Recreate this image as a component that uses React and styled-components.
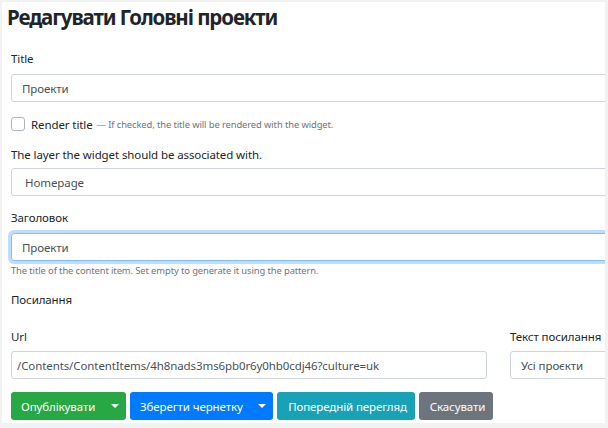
import React from 'react'
import styled, { createGlobalStyle } from 'styled-components';

const GlobalStyle = createGlobalStyle`
    html, body {
        margin : 0;
        padding : 0;
        background : #f2f2f2;
    }
    body {
        font-family : "Noto Sans", "Open Sans", sans-serif;
        color : #212529;
        font-size : 11.5px;
        letter-spacing : -0.1px;
    }
`;

const Page = styled.div`
    width : 608px;
    height : 428px;
    padding : 2px 3px 5px 2px;
    box-sizing : border-box;
`;
const Card = styled.div`
    height : 100%;
    background : #fff;
    overflow : hidden;
    padding : 2px 0 0 9px;
    box-sizing : border-box;
`;
const Heading = styled.h3`
    margin : 0 0 0 -4px;
    font-size : 20.5px;
    font-weight : 700;
    line-height : 27px;
    letter-spacing : -1.1px;
`;
const Label = styled.label`
    display : block;
    line-height : 18px;
    margin-top : ${p => p.$top || 0}px;
    margin-bottom : ${p => p.$gap ?? 6}px;
`;
const Input = styled.div`
    box-sizing : border-box;
    height : 28px;
    width : ${p => p.$width || '640px'};
    border : 1px solid ${p => p.$focus ? '#80bdff' : '#ced4da'};
    box-shadow : ${p => p.$focus ? '0 0 0 3px rgba(0,123,255,.25)' : 'none'};
    border-radius : 3px;
    padding : 0 ${p => p.$pad || 10}px;
    display : flex;
    align-items : center;
    color : #495057;
    white-space : nowrap;
    overflow : hidden;
`;
const CheckRow = styled.div`
    display : flex;
    align-items : center;
    height : 18px;
    margin-top : 13px;
`;
const Box = styled.span`
    width : 12px;
    height : 12px;
    border : 1px solid #adb5bd;
    border-radius : 3px;
    margin-right : 6px;
    background : #fff;
`;
const Hint = styled.span`
    font-size : 9.4px;
    color : #6c757d;
    margin-left : 4px;
`;
const HintLine = styled.div`
    font-size : 9.4px;
    color : #6c757d;
    line-height : 14px;
    margin-top : 3px;
`;
const Row = styled.div`
    display : flex;
    gap : 23px;
`;
const Col = styled.div`
    width : ${p => p.$w};
    flex-shrink : 0;
`;
const Buttons = styled.div`
    display : flex;
    gap : 4px;
    margin-top : 13px;
`;
const Btn = styled.div`
    height : 28px;
    box-sizing : border-box;
    border-radius : 3px;
    background : ${p => p.$bg};
    color : #fff;
    display : flex;
    align-items : center;
    justify-content : ${p => p.$center ? 'center' : 'flex-start'};
    padding : 0 7px 0 10px;
    white-space : nowrap;
    width : ${p => p.$w}px;
`;
const Caret = styled.span`
    margin-left : auto;
    width : 0;
    height : 0;
    border-left : 4px solid transparent;
    border-right : 4px solid transparent;
    border-top : 4px solid #fff;
`;

function App() {
    return (
        <Page>
            <GlobalStyle />
            <Card>
                <Heading>Редагувати Головні проекти</Heading>
                <Label $top={19}>Title</Label>
                <Input>Проекти</Input>
                <CheckRow>
                    <Box />
                    Render title <Hint>— If checked, the title will be rendered with the widget.</Hint>
                </CheckRow>
                <Label $top={13} $gap={4}>The layer the widget should be associated with.</Label>
                <Input $pad={13}>Homepage</Input>
                <Label $top={13}>Заголовок</Label>
                <Input $focus>Проекти</Input>
                <HintLine>The title of the content item. Set empty to generate it using the pattern.</HintLine>
                <Label $top={13} $gap={0}>Посилання</Label>
                <Row>
                    <Col $w="476px">
                        <Label $top={19} $gap={5}>Url</Label>
                        <Input $width="476px" $pad={5}>/Contents/ContentItems/4h8nads3ms6pb0r6y0hb0cdj46?culture=uk</Input>
                    </Col>
                    <Col $w="200px">
                        <Label $top={19} $gap={5}>Текст посилання</Label>
                        <Input $width="200px">Усі проєкти</Input>
                    </Col>
                </Row>
                <Buttons>
                    <Btn $bg="#28a745" $w={115}>Опублікувати<Caret /></Btn>
                    <Btn $bg="#007bff" $w={143}>Зберегти чернетку<Caret /></Btn>
                    <Btn $bg="#17a2b8" $w={138} $center>Попередній перегляд</Btn>
                    <Btn $bg="#6c757d" $w={74} $center>Скасувати</Btn>
                </Buttons>
            </Card>
        </Page>
    )
}

export default App
